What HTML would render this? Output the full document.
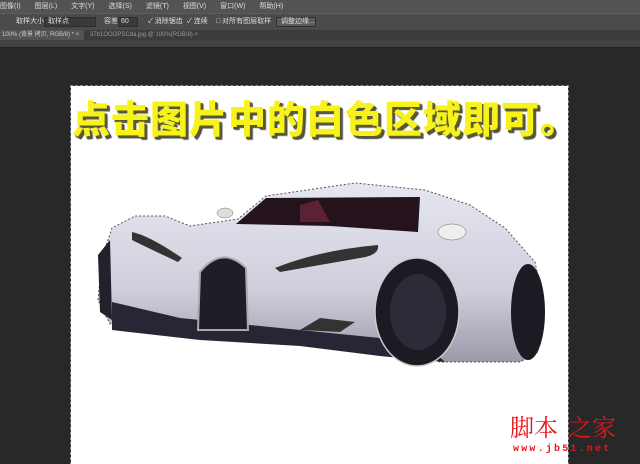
<!DOCTYPE html>
<html><head><meta charset="utf-8"><style>
*{margin:0;padding:0;box-sizing:border-box}
body{width:640px;height:464px;overflow:hidden;background:#282828;font-family:"Liberation Sans","Noto Sans CJK SC",sans-serif;position:relative}
.menu{position:absolute;left:0;top:0;width:640px;height:13px;background:#535353;color:#ddd;font-size:7px;line-height:13px;white-space:nowrap}
.menu span{margin-right:14px}
.opt{position:absolute;left:0;top:13px;width:640px;height:17px;background:#4b4b4b;border-top:1px solid #5e5e5e;color:#ddd;font-size:7px;line-height:16px;white-space:nowrap}
.opt i{font-style:normal;position:absolute;top:0}
.box{position:absolute;top:3px;height:10px;background:#3a3a3a;border:1px solid #2e2e2e}
.tabs{position:absolute;left:0;top:30px;width:640px;height:10px;background:#3c3c3c;font-size:6px;color:#ccc;line-height:10px}
.ruler{position:absolute;left:0;top:40px;width:640px;height:8px;background:#414141;border-bottom:1px solid #222}
.canvas{position:absolute;left:71px;top:86px;width:497px;height:378px;background:#fff;outline:1px dashed #888}
.title{position:absolute;left:72px;top:94px;font-family:"Noto Sans CJK SC",sans-serif;font-weight:900;font-size:38px;color:#f7f21a;letter-spacing:1px;white-space:nowrap;text-shadow:2px 2px 0 #5a5a30,3px 3px 1px #444;line-height:46px}
.wm{position:absolute;left:510px;top:411px;font-family:"Noto Serif CJK SC","Noto Sans CJK SC",serif;color:#e8141c;font-size:24px;white-space:nowrap;line-height:30px}
.wm2{position:absolute;left:513px;top:444px;font-family:"Liberation Mono",monospace;color:#e8141c;font-size:10px;letter-spacing:2.2px;font-weight:bold}
</style></head><body>
<div class="menu"><span>图像(I)</span><span>图层(L)</span><span>文字(Y)</span><span>选择(S)</span><span>滤镜(T)</span><span>视图(V)</span><span>窗口(W)</span><span>帮助(H)</span></div>
<div class="opt">
<i style="left:16px">取样大小:</i><div class="box" style="left:44px;width:52px"></div><i style="left:48px">取样点</i>
<i style="left:104px">容差:</i><div class="box" style="left:118px;width:20px"></div><i style="left:121px">60</i>
<i style="left:148px">✓ 消除锯齿</i><i style="left:187px">✓ 连续</i><i style="left:216px">□ 对所有图层取样</i>
<div class="box" style="left:276px;width:40px;background:#5a5a5a"></div><i style="left:281px">调整边缘...</i>
</div>
<div class="tabs"><span style="display:inline-block;width:84px;background:#535353;padding-left:2px">100% (背景 拷贝, RGB/8) * ×</span><span style="margin-left:6px;color:#999">37b1OOOPSCda.jpg @ 100%(RGB/8) ×</span></div>
<div class="ruler"></div>
<div class="canvas"></div>
<div class="title">点击图片中的白色区域即可。</div>
<svg style="position:absolute;left:0;top:0" width="640" height="464">
<defs><linearGradient id="b" x1="0" y1="0" x2="0" y2="1"><stop offset="0" stop-color="#e6e6f0"/><stop offset="0.6" stop-color="#cfcfdc"/><stop offset="1" stop-color="#9a9aa8"/></linearGradient></defs>
<path d="M98 300 L102 258 L112 228 L135 216 L165 216 L190 226 L238 219 L266 196 L355 183 L425 190 L470 205 L505 228 L535 262 L543 300 L538 352 L520 362 L440 362 L380 348 L300 338 L200 332 L110 324 Z" fill="url(#b)" stroke="#555" stroke-width="1" stroke-dasharray="2 2"/>
<path d="M236 224 L266 198 L420 197 L418 232 L330 226 Z" fill="#24121c"/>
<path d="M300 205 L318 200 L330 222 L300 222Z" fill="#5a2232"/>
<path d="M98 255 L110 240 L112 320 L100 312Z" fill="#22222c"/>
<path d="M112 302 L180 318 L300 330 L380 338 L430 348 L445 362 L380 356 L300 346 L200 340 L112 330 Z" fill="#262634"/>
<path d="M198 330 L200 272 Q222 245 246 268 L248 330 Z" fill="#1e1e28" stroke="#aaa" stroke-width="2"/>
<ellipse cx="417" cy="312" rx="42" ry="54" fill="#1b1b24" stroke="#ccc" stroke-width="1.5"/>
<ellipse cx="418" cy="312" rx="28" ry="38" fill="#2c2c38"/>
<ellipse cx="528" cy="312" rx="17" ry="48" fill="#1b1b24"/>
<path d="M132 232 Q150 236 182 258 L178 262 Q148 248 132 240Z" fill="#333"/>
<path d="M275 268 Q320 250 378 245 Q380 255 360 258 L280 272Z" fill="#333"/>
<path d="M300 330 L320 318 L355 322 L340 332Z" fill="#333"/>
<ellipse cx="225" cy="213" rx="8" ry="5" fill="#ddd" stroke="#777" stroke-width="0.5"/>
<ellipse cx="452" cy="232" rx="14" ry="8" fill="#eee" stroke="#666" stroke-width="0.5"/>
</svg>
<div class="wm">脚本<span style="margin-left:10px">之家</span></div>
<div class="wm2">www.jb51.net</div>
</body></html>
